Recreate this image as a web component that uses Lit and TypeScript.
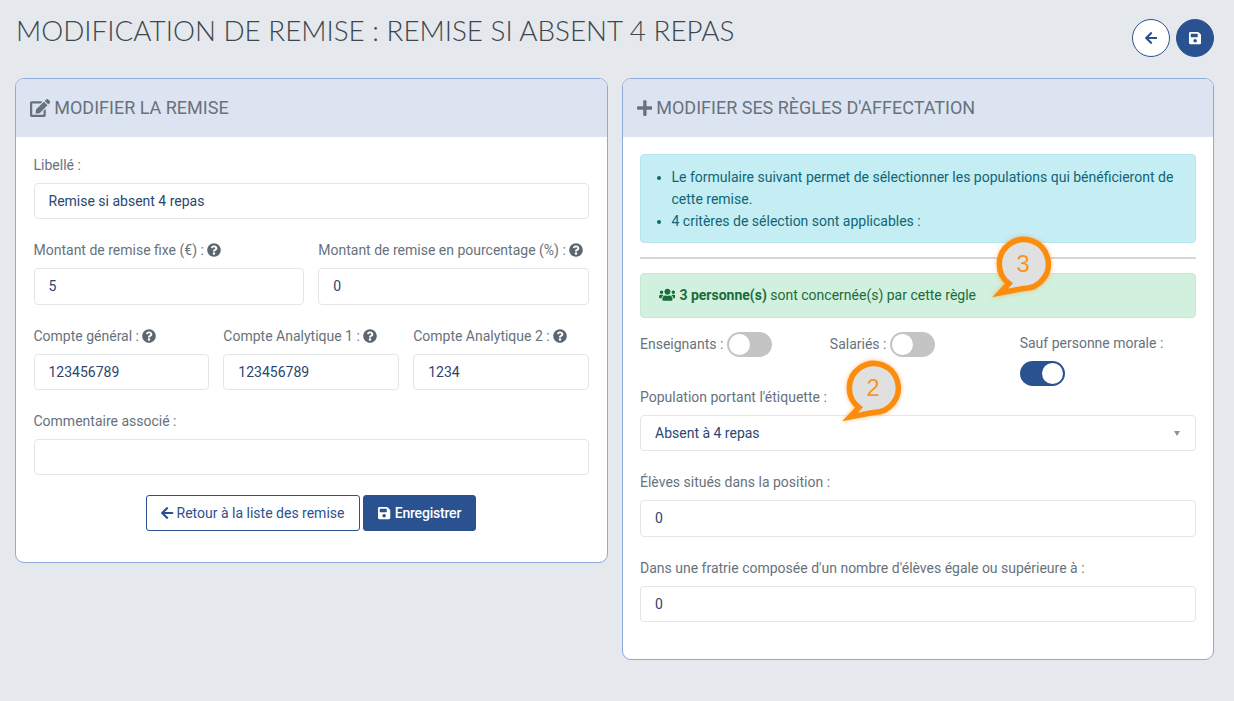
import { LitElement, html, css, svg } from "lit";
import { customElement } from "lit/decorators.js";

const P = {
  save: [448, "M433.941 129.941l-83.882-83.882A48 48 0 0 0 316.118 32H48C21.49 32 0 53.49 0 80v352c0 26.51 21.49 48 48 48h352c26.51 0 48-21.49 48-48V163.882a48 48 0 0 0-14.059-33.941zM224 416c-35.346 0-64-28.654-64-64 0-35.346 28.654-64 64-64s64 28.654 64 64c0 35.346-28.654 64-64 64zm96-304.52V212c0 6.627-5.373 12-12 12H76c-6.627 0-12-5.373-12-12V108c0-6.627 5.373-12 12-12h228.52c3.183 0 6.235 1.264 8.485 3.515l3.48 3.48A11.996 11.996 0 0 1 320 111.48z"],
  left: [448, "M257.5 445.1l-22.2 22.2c-9.4 9.4-24.6 9.4-33.9 0L7 273c-9.4-9.4-9.4-24.6 0-33.9L201.4 44.7c9.4-9.4 24.6-9.4 33.9 0l22.2 22.2c9.5 9.5 9.3 25-.4 34.3L136.6 216H424c13.3 0 24 10.7 24 24v32c0 13.3-10.7 24-24 24H136.6l120.5 114.8c9.8 9.3 10 24.8.4 34.3z"],
  edit: [576, "M402.6 83.2l90.2 90.2c3.8 3.8 3.8 10 0 13.8L274.4 405.6l-92.8 10.3c-12.4 1.4-22.9-9.1-21.5-21.5l10.3-92.8L388.8 83.2c3.8-3.8 10-3.8 13.8 0zm162-22.9l-48.8-48.8c-15.2-15.2-39.9-15.2-55.2 0l-35.4 35.4c-3.8 3.8-3.8 10 0 13.8l90.2 90.2c3.8 3.8 10 3.8 13.8 0l35.4-35.4c15.2-15.3 15.2-40 0-55.2zM384 346.2V448H64V128h229.8c3.2 0 6.2-1.3 8.5-3.5l40-40c7.6-7.6 2.2-20.5-8.5-20.5H48C21.5 64 0 85.5 0 112v352c0 26.5 21.5 48 48 48h352c26.5 0 48-21.5 48-48V306.2c0-10.7-12.9-16-20.5-8.5l-40 40c-2.2 2.3-3.5 5.3-3.5 8.5z"],
  plus: [448, "M416 208H272V64c0-17.67-14.33-32-32-32h-32c-17.67 0-32 14.33-32 32v144H32c-17.67 0-32 14.33-32 32v32c0 17.67 14.33 32 32 32h144v144c0 17.67 14.33 32 32 32h32c17.67 0 32-14.33 32-32V304h144c17.67 0 32-14.33 32-32v-32c0-17.67-14.33-32-32-32z"],
  users: [640, "M96 224c35.3 0 64-28.7 64-64s-28.7-64-64-64-64 28.7-64 64 28.7 64 64 64zm448 0c35.3 0 64-28.7 64-64s-28.7-64-64-64-64 28.7-64 64 28.7 64 64 64zm32 32h-64c-17.6 0-33.5 7.1-45.1 18.6 40.3 22.1 68.9 62 75.1 109.4h66c17.7 0 32-14.3 32-32v-32c0-35.3-28.7-64-64-64zm-256 0c61.9 0 112-50.1 112-112S381.9 32 320 32 208 82.1 208 144s50.1 112 112 112zm76.8 32h-8.3c-20.8 10-43.9 16-68.5 16s-47.6-6-68.5-16h-8.3C179.6 288 128 339.6 128 403.2V432c0 26.5 21.5 48 48 48h288c26.5 0 48-21.5 48-48v-28.8c0-63.6-51.6-115.2-115.2-115.2zm-223.7-13.4C161.5 263.1 145.6 256 128 256H64c-35.3 0-64 28.7-64 64v32c0 17.7 14.3 32 32 32h65.9c6.3-47.4 34.9-87.3 75.2-109.4z"],
  help: [512, "M504 256c0 136.997-111.043 248-248 248S8 392.997 8 256C8 119.083 119.043 8 256 8s248 111.083 248 248zM262.655 90c-54.497 0-89.255 22.957-116.549 63.758-3.536 5.286-2.353 12.415 2.715 16.258l34.699 26.31c5.205 3.947 12.621 3.008 16.665-2.122 17.864-22.658 30.113-35.797 57.303-35.797 20.429 0 45.698 13.148 45.698 32.958 0 14.976-12.363 22.667-32.534 33.976C247.128 238.528 216 254.941 216 296v4c0 6.627 5.373 12 12 12h56c6.627 0 12-5.373 12-12v-1.333c0-28.462 83.186-29.647 83.186-106.667 0-58.002-60.165-102-116.531-102zM256 338c-25.365 0-46 20.635-46 46 0 25.364 20.635 46 46 46s46-20.636 46-46c0-25.365-20.635-46-46-46z"],
} as const;

const icon = (n: keyof typeof P, cls = "") =>
  html`<svg class="fa ${cls}" viewBox="0 0 ${P[n][0]} 512" aria-hidden="true"><path fill="currentColor" d="${P[n][1]}"></path></svg>`;

@customElement("app-root")
export class AppRoot extends LitElement {
  static styles = css`
    :host { display: block; min-height: 701px; background: #e5e8ed; font: 14px/21px Roboto, "Liberation Sans", sans-serif; color: #67727d; position: relative; }
    * { box-sizing: border-box; }
    .fa { height: 1em; width: auto; display: inline-block; vertical-align: -0.125em; }
    .page { padding: 19px 20px 40px 15px; }
    .top { display: flex; justify-content: space-between; align-items: flex-start; margin-bottom: 21px; height: 38px; }
    h1 { margin: -3px 0 0 1px; font: 300 27.8px/30px Lato, "Open Sans", sans-serif; color: #3c464e; white-space: nowrap; }
    .rounds { display: flex; gap: 6px; }
    .round { width: 38px; height: 38px; border-radius: 50%; border: 1px solid #2b5290; background: #fff; color: #2b5290; display: flex; align-items: center; justify-content: center; font-size: 14px; padding: 0; }
    .round.fill { background: #2b5290; color: #fff; }
    .cols { display: flex; gap: 14px; align-items: flex-start; }
    .card { flex: 1 1 0; min-width: 0; background: #fff; border: 1px solid #8eaad9; border-radius: 9px; overflow: hidden; }
    .head { height: 58px; background: #dde4f1; display: flex; align-items: center; gap: 4px; padding: 0 14px 1px; font-size: 18px; font-weight: 400; color: #68727c; text-transform: uppercase; white-space: nowrap; }
    .head .fa { font-size: 18px; }
    .body { padding: 18px 17.5px 17px; }
    .body.r { padding: 16.5px 17.5px 16px; }
    .field { margin-bottom: 21px; }
    .field.last { margin-bottom: 20px; }
    label, .lab { display: block; margin-bottom: 7px; white-space: nowrap; }
    .help { color: #5b6671; font-size: 14px; vertical-align: -2px; }
    input, select { display: block; width: 100%; height: 36.3px; border: 1px solid #e2e6e8; border-radius: 4px; background: #fff; padding: 0 14px; font: 14px/21px Roboto, sans-serif; color: #2c4672; outline: none; appearance: none; }
    .g2 { display: grid; grid-template-columns: 1fr 1fr; gap: 14px; }
    .g3 { display: grid; grid-template-columns: 1fr 1fr 1fr; gap: 14px; }
    .actions { display: flex; justify-content: center; gap: 3px; padding-bottom: 14px; }
    .btn { height: 36px; border: 1px solid #2b5290; border-radius: 3px; background: #fff; color: #2b5290; padding: 0 15px 0 14px; display: flex; align-items: center; gap: 3px; font: 14px/21px Roboto, sans-serif; white-space: nowrap; }
    .btn.fill { background: #2b5290; color: #fff; font-weight: 500; gap: 4px; letter-spacing: -0.2px; padding: 0 14px; }
    .alert { border: 1px solid; border-radius: 4px; padding: 10.5px 17.5px; }
    .info { background: #c5edf4; border-color: #b4e7f0; color: #0f6674; padding: 11px 17.5px 10px; }
    .info ul { margin: 0; padding: 0 0 0 13px; line-height: 22px; }
    .ok { background: #d1f0de; border-color: #c3ebd3; color: #1a6b3c; height: 45px; display: flex; align-items: center; gap: 4px; }
    .ok .fa { font-size: 13.5px; }
    .ok b { font-weight: 700; }
    hr { margin: 14px 0; height: 2px; border: 0; background: #d6d6d6; }
    .togs { display: grid; grid-template-columns: 1fr 1fr 1fr; gap: 14px; margin: 14px 0 1px; }
    .tg { display: flex; align-items: center; gap: 4px; height: 25px; white-space: nowrap; }
    .stack { padding-top: 1.5px; }
    .sw { width: 45px; height: 25px; border-radius: 13px; background: #c4c4c4; display: flex; align-items: center; padding: 0 2px; flex: none; }
    .sw i { width: 21px; height: 21px; border-radius: 50%; background: #fff; display: block; }
    .sw.on { background: #2b5290; justify-content: flex-end; }
    .pop { margin-bottom: 21px; }
    .sel { position: relative; }
    .sel::after { content: ""; position: absolute; right: 16px; top: 16px; border: 3.5px solid transparent; border-top: 5px solid #8b9299; border-bottom: 0; }
    .call { position: absolute; width: 54px; height: 64px; filter: drop-shadow(0 0 2px rgba(251, 140, 14, 0.55)); }
    .call svg { display: block; position: absolute; left: -6px; top: 0; overflow: visible; }
    .call span { position: absolute; left: 0; width: 52px; top: 9px; text-align: center; font: 24px/36px "Liberation Sans", sans-serif; color: #f7931e; }
    .c3 { left: 997px; top: 237px; }
    .c2 { left: 847px; top: 361px; }
  `;

  private callout(cls: string, n: string) {
    return html`<div class="call ${cls}">
      <svg viewBox="-6 0 66 66" width="66" height="66" aria-hidden="true">
        ${svg`<path d="M12 46.5A24.5 24.5 0 1 1 26 51.5L3 56Z" fill="#e0e0e0" stroke="#fb8c0e" stroke-width="5.5" stroke-miterlimit="10" stroke-linejoin="miter"></path>`}
      </svg>
      <span>${n}</span>
    </div>`;
  }

  render() {
    return html`
      <div class="page">
        <div class="top">
          <h1>MODIFICATION DE REMISE : REMISE SI ABSENT 4 REPAS</h1>
          <div class="rounds">
            <button class="round">${icon("left")}</button>
            <button class="round fill">${icon("save")}</button>
          </div>
        </div>
        <div class="cols">
          <section class="card">
            <div class="head">${icon("edit")}<span>Modifier la remise</span></div>
            <div class="body">
              <div class="field"><label>Libellé :</label><input value="Remise si absent 4 repas" /></div>
              <div class="g2">
                <div class="field"><label>Montant de remise fixe (€) : ${icon("help", "help")}</label><input value="5" /></div>
                <div class="field"><label>Montant de remise en pourcentage (%) : ${icon("help", "help")}</label><input value="0" /></div>
              </div>
              <div class="g3">
                <div class="field"><label>Compte général : ${icon("help", "help")}</label><input value="123456789" /></div>
                <div class="field"><label>Compte Analytique 1 : ${icon("help", "help")}</label><input value="123456789" /></div>
                <div class="field"><label>Compte Analytique 2 : ${icon("help", "help")}</label><input value="1234" /></div>
              </div>
              <div class="field last"><label>Commentaire associé :</label><input value="" /></div>
              <div class="actions">
                <button class="btn">${icon("left")}Retour à la liste des remise</button>
                <button class="btn fill">${icon("save")}Enregistrer</button>
              </div>
            </div>
          </section>
          <section class="card">
            <div class="head">${icon("plus")}<span>Modifier ses règles d'affectation</span></div>
            <div class="body r">
              <div class="alert info">
                <ul>
                  <li>Le formulaire suivant permet de sélectionner les populations qui bénéficieront de cette remise.</li>
                  <li>4 critères de sélection sont applicables :</li>
                </ul>
              </div>
              <hr />
              <div class="alert ok">${icon("users")}<span><b>3 personne(s)</b> sont concernée(s) par cette règle</span></div>
              <div class="togs">
                <div class="tg">Enseignants : <div class="sw"><i></i></div></div>
                <div class="tg">Salariés : <div class="sw"><i></i></div></div>
                <div class="stack"><div class="lab">Sauf personne morale :</div><div class="sw on"><i></i></div></div>
              </div>
              <div class="pop">
                <label>Population portant l'étiquette :</label>
                <div class="sel"><select><option>Absent à 4 repas</option></select></div>
              </div>
              <div class="field"><label>Élèves situés dans la position :</label><input value="0" /></div>
              <div class="field"><label>Dans une fratrie composée d'un nombre d'élèves égale ou supérieure à :</label><input value="0" /></div>
            </div>
          </section>
        </div>
      </div>
      ${this.callout("c3", "3")}
      ${this.callout("c2", "2")}
    `;
  }
}
